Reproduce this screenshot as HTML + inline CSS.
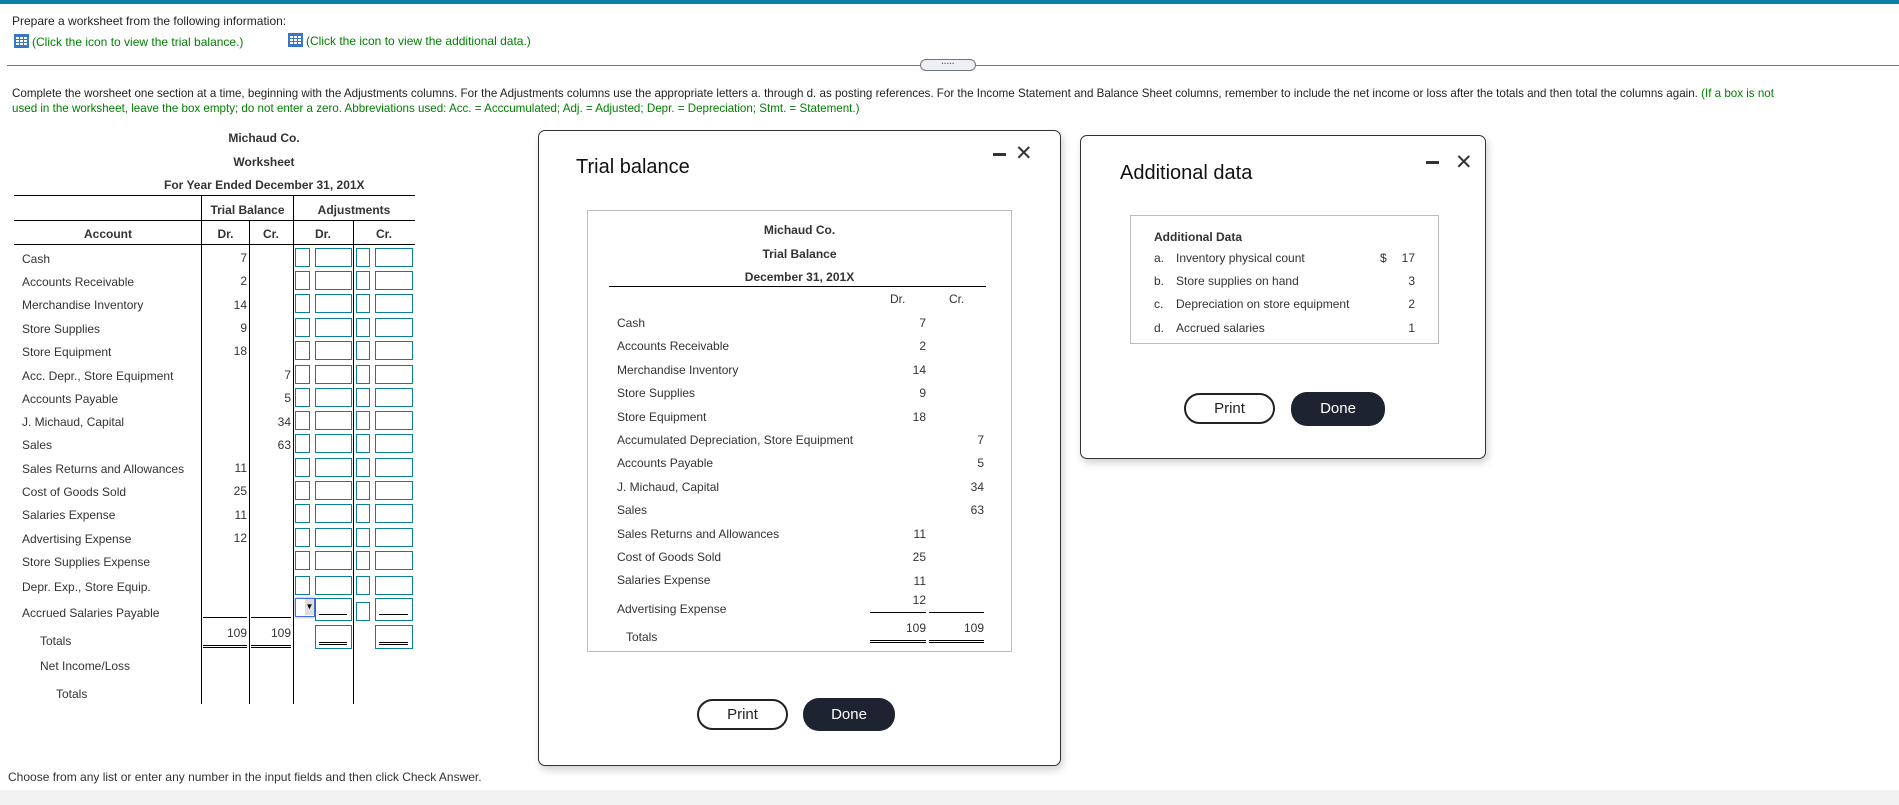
<!DOCTYPE html>
<html><head><meta charset="utf-8"><style>
*{margin:0;padding:0;box-sizing:border-box}
body{width:1899px;height:805px;overflow:hidden;background:#fff;font-family:"Liberation Sans",Arial,sans-serif;font-size:12px;color:#333;position:relative}
.a{position:absolute;white-space:nowrap}
.g{color:#008000}
.r{text-align:right}
.c{text-align:center}
.vl{position:absolute;width:1px;background:#000}
.hl{position:absolute;height:1px;background:#000}
.dl{position:absolute;height:3px;border-top:1px solid #000;border-bottom:1px solid #000}
.bx{position:absolute;border:1.5px solid #0a7f9c;height:19px;background:#fff}
.modal{position:absolute;border:1px solid #333;border-radius:7px;background:#fff;box-shadow:2px 4px 8px rgba(0,0,0,.18)}
.btn{position:absolute;border-radius:16px;font-size:15px;text-align:center}
.ic{display:inline-block;width:15px;height:14px;vertical-align:-2px;margin-right:3px}
</style></head><body>
<div class="a" style="left:0;top:0;width:1899px;height:4px;background:#0a7ea4"></div>
<div class="a" style="left:12px;top:14px;color:#222">Prepare a worksheet from the following information:</div>
<div class="a g" style="left:14px;top:34px"><svg class="ic" viewBox="0 0 15 14"><rect width="15" height="14" fill="#3a76c4"/><g fill="#fff"><rect x="2" y="3" width="3" height="2"/><rect x="6" y="3" width="3" height="2"/><rect x="10" y="3" width="3" height="2"/><rect x="2" y="6" width="3" height="2"/><rect x="6" y="6" width="3" height="2"/><rect x="10" y="6" width="3" height="2"/><rect x="2" y="9" width="3" height="2"/><rect x="6" y="9" width="3" height="2"/><rect x="10" y="9" width="3" height="2"/></g></svg>(Click the icon to view the trial balance.)</div>
<div class="a g" style="left:288px;top:33px"><svg class="ic" viewBox="0 0 15 14"><rect width="15" height="14" fill="#3a76c4"/><g fill="#fff"><rect x="2" y="3" width="3" height="2"/><rect x="6" y="3" width="3" height="2"/><rect x="10" y="3" width="3" height="2"/><rect x="2" y="6" width="3" height="2"/><rect x="6" y="6" width="3" height="2"/><rect x="10" y="6" width="3" height="2"/><rect x="2" y="9" width="3" height="2"/><rect x="6" y="9" width="3" height="2"/><rect x="10" y="9" width="3" height="2"/></g></svg>(Click the icon to view the additional data.)</div>
<div class="a" style="left:7px;top:65px;width:1892px;height:1px;background:#6c7680"></div>
<div class="a" style="left:920px;top:59px;width:56px;height:12px;border:1px solid #6c7680;border-radius:6px;background:#eef0f3;font-size:8px;line-height:8px;text-align:center;color:#555;font-weight:bold">·····</div>
<div class="a" style="left:12px;top:86px;line-height:15px;font-size:11.6px;color:#222">Complete the worsheet one section at a time, beginning with the Adjustments columns. For the Adjustments columns use the appropriate letters a. through d. as posting references. For the Income Statement and Balance Sheet columns, remember to include the net income or loss after the totals and then total the columns again. <span class="g">(If a box is not</span><br><span class="g">used in the worksheet, leave the box empty; do not enter a zero. Abbreviations used: Acc. = Acccumulated; Adj. = Adjusted; Depr. = Depreciation; Stmt. = Statement.)</span></div>

<!-- worksheet -->
<div class="a c" style="left:164px;width:200px;top:131px;font-weight:bold">Michaud Co.</div>
<div class="a c" style="left:164px;width:200px;top:155px;font-weight:bold">Worksheet</div>
<div class="a c" style="left:164px;width:200px;top:178px;font-weight:bold">For Year Ended December 31, 201X</div>
<div class="hl" style="left:14px;top:195px;width:401px"></div>
<div class="hl" style="left:14px;top:220px;width:401px"></div>
<div class="hl" style="left:14px;top:244px;width:401px"></div>
<div class="a c" style="left:202px;width:91px;top:203px;font-weight:bold">Trial Balance</div>
<div class="a c" style="left:293px;width:122px;top:203px;font-weight:bold">Adjustments</div>
<div class="a c" style="left:14px;width:188px;top:227px;font-weight:bold">Account</div>
<div class="a c" style="left:202px;width:47px;top:227px;font-weight:bold">Dr.</div>
<div class="a c" style="left:249px;width:44px;top:227px;font-weight:bold">Cr.</div>
<div class="a c" style="left:293px;width:60px;top:227px;font-weight:bold">Dr.</div>
<div class="a c" style="left:353px;width:62px;top:227px;font-weight:bold">Cr.</div>
<div class="vl" style="left:201px;top:196px;height:508px"></div>
<div class="vl" style="left:249px;top:220px;height:484px"></div>
<div class="vl" style="left:293px;top:196px;height:508px"></div>
<div class="vl" style="left:353px;top:220px;height:484px"></div>
<div style="position:absolute;left:22px;top:0">
<div class="a" style="top:252px">Cash</div>
<div class="a" style="top:275px">Accounts Receivable</div>
<div class="a" style="top:298px">Merchandise Inventory</div>
<div class="a" style="top:322px">Store Supplies</div>
<div class="a" style="top:345px">Store Equipment</div>
<div class="a" style="top:369px">Acc. Depr., Store Equipment</div>
<div class="a" style="top:392px">Accounts Payable</div>
<div class="a" style="top:415px">J. Michaud, Capital</div>
<div class="a" style="top:438px">Sales</div>
<div class="a" style="top:462px">Sales Returns and Allowances</div>
<div class="a" style="top:485px">Cost of Goods Sold</div>
<div class="a" style="top:508px">Salaries Expense</div>
<div class="a" style="top:532px">Advertising Expense</div>
<div class="a" style="top:555px">Store Supplies Expense</div>
<div class="a" style="top:580px">Depr. Exp., Store Equip.</div>
<div class="a" style="top:606px">Accrued Salaries Payable</div>
<div class="a" style="left:18px;top:634px">Totals</div>
<div class="a" style="left:18px;top:659px">Net Income/Loss</div>
<div class="a" style="left:34px;top:687px">Totals</div>
</div>
<div class="a r" style="left:200px;width:47px;top:247px;line-height:23.35px">7<br>2<br>14<br>9<br>18</div>
<div class="a r" style="left:245px;width:46px;top:364px;line-height:23.35px">7<br>5<br>34<br>63</div>
<div class="a r" style="left:200px;width:47px;top:457px;line-height:23.35px">11<br>25<br>11<br>12</div>
<div class="hl" style="left:203px;top:617px;width:44px"></div>
<div class="hl" style="left:251px;top:617px;width:40px"></div>
<div class="a r" style="left:200px;width:47px;top:626px">109</div>
<div class="a r" style="left:245px;width:46px;top:626px">109</div>
<div class="dl" style="left:203px;top:645px;width:44px"></div>
<div class="dl" style="left:251px;top:645px;width:40px"></div>
<div id="bxs"></div>
<script>
var tops=[248,271,294,318,341,365,388,411,434,458,481,504,528,551,576];
var h='';
tops.forEach(function(t){h+='<div class="bx" style="left:295px;top:'+t+'px;width:15px"></div><div class="bx" style="left:315px;top:'+t+'px;width:37px"></div><div class="bx" style="left:356px;top:'+t+'px;width:14px"></div><div class="bx" style="left:375px;top:'+t+'px;width:38px"></div>';});
h+='<div class="bx" style="left:295px;top:598px;width:20px;border-color:#4a6fd8;box-shadow:0 0 2px #6a8fe8"><div style="position:absolute;right:0;top:0;width:9px;height:16px;background:#ddd;font-size:8px;text-align:center;line-height:16px;color:#000">▼</div></div>';
h+='<div class="bx" style="left:315px;top:598px;width:37px;height:23px"><div class="hl" style="left:3px;top:15px;width:28px"></div></div>';
h+='<div class="bx" style="left:356px;top:602px;width:14px"></div>';
h+='<div class="bx" style="left:375px;top:598px;width:38px;height:23px"><div class="hl" style="left:3px;top:15px;width:29px"></div></div>';
h+='<div class="bx" style="left:315px;top:625px;width:37px;height:24px"><div class="dl" style="left:3px;top:16px;width:28px"></div></div>';
h+='<div class="bx" style="left:375px;top:625px;width:38px;height:24px"><div class="dl" style="left:3px;top:16px;width:29px"></div></div>';
document.getElementById('bxs').innerHTML=h;
</script>
<div class="a" style="left:8px;top:770px;color:#333">Choose from any list or enter any number in the input fields and then click Check Answer.</div>
<div class="a" style="left:0;top:790px;width:1899px;height:15px;background:#f2f2f2"></div>

<!-- trial balance modal -->
<div class="modal" style="left:538px;top:130px;width:523px;height:636px">
<div class="a" style="left:37px;top:25px;font-size:20px;color:#111">Trial balance</div>
<div class="a" style="left:454px;top:22px;width:13px;height:3px;background:#333"></div>
<div class="a" style="left:476px;top:10px;font-size:21px;color:#333">✕</div>
<div class="a" style="left:48px;top:79px;width:425px;height:442px;border:1px solid #bbb">
 <div class="a c" style="left:0;width:423px;top:12px;font-weight:bold">Michaud Co.</div>
 <div class="a c" style="left:0;width:423px;top:36px;font-weight:bold">Trial Balance</div>
 <div class="a c" style="left:0;width:423px;top:59px;font-weight:bold">December 31, 201X</div>
 <div class="hl" style="left:21px;top:75px;width:377px"></div>
 <div class="a" style="left:302px;top:81px">Dr.</div>
 <div class="a" style="left:361px;top:81px">Cr.</div>
 <div class="a" style="left:29px;top:101px;line-height:23.4px">Cash<br>Accounts Receivable<br>Merchandise Inventory<br>Store Supplies<br>Store Equipment<br>Accumulated Depreciation, Store Equipment<br>Accounts Payable<br>J. Michaud, Capital<br>Sales<br>Sales Returns and Allowances<br>Cost of Goods Sold<br>Salaries Expense</div>
 <div class="a" style="left:29px;top:391px">Advertising Expense</div>
 <div class="a" style="left:38px;top:419px">Totals</div>
 <div class="a r" style="left:270px;width:68px;top:101px;line-height:23.4px">7<br>2<br>14<br>9<br>18</div>
 <div class="a r" style="left:330px;width:66px;top:218px;line-height:23.4px">7<br>5<br>34<br>63</div>
 <div class="a r" style="left:270px;width:68px;top:312px;line-height:23.4px">11<br>25<br>11</div>
 <div class="a r" style="left:270px;width:68px;top:382px">12</div>
 <div class="hl" style="left:282px;top:401px;width:56px"></div>
 <div class="hl" style="left:341px;top:401px;width:55px"></div>
 <div class="a r" style="left:270px;width:68px;top:410px">109</div>
 <div class="a r" style="left:330px;width:66px;top:410px">109</div>
 <div class="dl" style="left:282px;top:429px;width:56px"></div>
 <div class="dl" style="left:341px;top:429px;width:55px"></div>
</div>
<div class="btn" style="left:158px;top:568px;width:91px;height:31px;border:2px solid #222;line-height:27px;color:#222">Print</div>
<div class="btn" style="left:264px;top:567px;width:92px;height:33px;background:#1d2330;color:#fff;line-height:33px">Done</div>
</div>

<!-- additional data modal -->
<div class="modal" style="left:1080px;top:135px;width:406px;height:324px">
<div class="a" style="left:39px;top:26px;font-size:20px;color:#111">Additional data</div>
<div class="a" style="left:345px;top:25px;width:13px;height:3px;background:#333"></div>
<div class="a" style="left:374px;top:14px;font-size:21px;color:#333">✕</div>
<div class="a" style="left:49px;top:79px;width:309px;height:129px;border:1px solid #bbb">
 <div class="a" style="left:23px;top:14px;font-weight:bold">Additional Data</div>
 <div class="a" style="left:23px;top:31px;line-height:23.2px">a.<br>b.<br>c.<br>d.</div>
 <div class="a" style="left:45px;top:31px;line-height:23.2px">Inventory physical count<br>Store supplies on hand<br>Depreciation on store equipment<br>Accrued salaries</div>
 <div class="a" style="left:249px;top:31px;line-height:23.2px">$</div>
 <div class="a r" style="left:260px;width:24px;top:31px;line-height:23.2px">17<br>3<br>2<br>1</div>
</div>
<div class="btn" style="left:103px;top:257px;width:91px;height:31px;border:2px solid #222;line-height:27px;color:#222">Print</div>
<div class="btn" style="left:210px;top:256px;width:94px;height:34px;background:#1d2330;color:#fff;line-height:34px">Done</div>
</div>
</body></html>
